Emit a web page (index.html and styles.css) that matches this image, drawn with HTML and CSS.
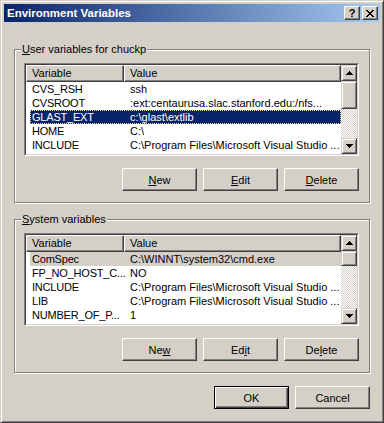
FILE: index.html
```html
<!DOCTYPE html>
<html>
<head>
<meta charset="utf-8">
<title>Environment Variables</title>
<link rel="stylesheet" href="styles.css">
</head>
<body>
<div class="window">
  <div class="caption">
    <span class="title">Environment Variables</span>
    <div class="cap-buttons">
      <span class="cap-btn help">?</span>
      <span class="cap-btn close"><svg width="8" height="7" viewBox="0 0 8 7"><path d="M0 0h2v1H0zM6 0h2v1H6zM1 1h2v1H1zM5 1h2v1H5zM2 2h4v1H2zM3 3h2v1H3zM2 4h4v1H2zM1 5h2v1H1zM5 5h2v1H5zM0 6h2v1H0zM6 6h2v1H6z" fill="#000"/></svg></span>
    </div>
  </div>
  <div class="client">
    <div class="group">
      <span class="legend"><u>U</u>ser variables for chuckp</span>
      <div class="listview">
        <div class="lv-inner">
          <div class="lv-main">
            <div class="lv-header"><div class="hcell c1">Variable</div><div class="hcell c2">Value</div></div>
            <div class="row"><span class="c1">CVS_RSH</span><span class="c2">ssh</span></div>
            <div class="row"><span class="c1">CVSROOT</span><span class="c2">:ext:centaurusa.slac.stanford.edu:/nfs...</span></div>
            <div class="row sel"><span class="c1">GLAST_EXT</span><span class="c2">c:\glast\extlib</span></div>
            <div class="row"><span class="c1">HOME</span><span class="c2">C:\</span></div>
            <div class="row"><span class="c1">INCLUDE</span><span class="c2">C:\Program Files\Microsoft Visual Studio ...</span></div>
          </div>
          <div class="scrollbar">
            <div class="sb-btn"><svg width="7" height="4" viewBox="0 0 7 4"><path d="M3 0h1v1H3zM2 1h3v1H2zM1 2h5v1H1zM0 3h7v1H0z" fill="#000"/></svg></div>
            <div class="sb-track"><div class="sb-thumb" style="height:28px"></div></div>
            <div class="sb-btn"><svg width="7" height="4" viewBox="0 0 7 4"><path d="M0 0h7v1H0zM1 1h5v1H1zM2 2h3v1H2zM3 3h1v1H3z" fill="#000"/></svg></div>
          </div>
        </div>
      </div>
      <div class="btn-row">
        <button class="btn"><u>N</u>ew</button>
        <button class="btn"><u>E</u>dit</button>
        <button class="btn"><u>D</u>elete</button>
      </div>
    </div>

    <div class="group">
      <span class="legend"><u>S</u>ystem variables</span>
      <div class="listview">
        <div class="lv-inner">
          <div class="lv-main">
            <div class="lv-header"><div class="hcell c1">Variable</div><div class="hcell c2">Value</div></div>
            <div class="row sel-inactive"><span class="c1">ComSpec</span><span class="c2">C:\WINNT\system32\cmd.exe</span></div>
            <div class="row"><span class="c1">FP_NO_HOST_C...</span><span class="c2">NO</span></div>
            <div class="row"><span class="c1">INCLUDE</span><span class="c2">C:\Program Files\Microsoft Visual Studio ...</span></div>
            <div class="row"><span class="c1">LIB</span><span class="c2">C:\Program Files\Microsoft Visual Studio ...</span></div>
            <div class="row"><span class="c1">NUMBER_OF_P...</span><span class="c2">1</span></div>
          </div>
          <div class="scrollbar">
            <div class="sb-btn"><svg width="7" height="4" viewBox="0 0 7 4"><path d="M3 0h1v1H3zM2 1h3v1H2zM1 2h5v1H1zM0 3h7v1H0z" fill="#000"/></svg></div>
            <div class="sb-track"><div class="sb-thumb" style="height:15px"></div></div>
            <div class="sb-btn"><svg width="7" height="4" viewBox="0 0 7 4"><path d="M0 0h7v1H0zM1 1h5v1H1zM2 2h3v1H2zM3 3h1v1H3z" fill="#000"/></svg></div>
          </div>
        </div>
      </div>
      <div class="btn-row">
        <button class="btn">Ne<u>w</u></button>
        <button class="btn">Ed<u>i</u>t</button>
        <button class="btn">De<u>l</u>ete</button>
      </div>
    </div>

    <div class="dialog-buttons">
      <button class="btn default">OK</button>
      <button class="btn">Cancel</button>
    </div>
  </div>
</div>
</body>
</html>
```

FILE: styles.css
```css
* {
  box-sizing: border-box;
}

html,
body {
  margin: 0;
  padding: 0;
}

body {
  width: 384px;
  height: 423px;
  overflow: hidden;
  background: #d4d0c8;
  font-family: "Liberation Sans", Arial, sans-serif;
  font-size: 11px;
  color: #000;
}

.window {
  width: 384px;
  height: 423px;
  background: #d4d0c8;
  border: 1px solid;
  border-color: #d4d0c8 #404040 #404040 #d4d0c8;
  box-shadow: inset 1px 1px 0 #fff, inset -1px -1px 0 #808080;
  padding: 3px;
}

.caption {
  height: 18px;
  display: flex;
  align-items: center;
  padding: 0 2px 0 3px;
  background: linear-gradient(to right, #0a246a, #a6caf0);
}

.title {
  flex: 1;
  color: #fff;
  font-weight: bold;
  font-size: 11.5px;
  white-space: nowrap;
}

.cap-buttons {
  display: flex;
  gap: 2px;
}

.cap-btn {
  width: 16px;
  height: 14px;
  display: flex;
  align-items: center;
  justify-content: center;
  background: #d4d0c8;
  border: 1px solid;
  border-color: #fff #404040 #404040 #fff;
  box-shadow: inset -1px -1px 0 #808080;
  font-weight: bold;
  font-size: 11px;
  line-height: 12px;
}

.cap-btn svg {
  display: block;
}

.client {
  padding: 0 10px;
}

.group {
  position: relative;
  margin-top: 27px;
  border: 1px solid #808080;
  box-shadow: 1px 1px 0 #fff, inset 1px 1px 0 #fff;
  padding: 13px 10px 11px 9px;
}

.group + .group {
  margin-top: 16px;
}

.legend {
  position: absolute;
  top: -7px;
  left: 6px;
  padding: 0 1px;
  line-height: 13px;
  background: #d4d0c8;
  white-space: nowrap;
}

.listview {
  height: 93px;
  border: 1px solid;
  border-color: #808080 #fff #fff #808080;
}

.lv-inner {
  height: 100%;
  display: flex;
  background: #fff;
  border: 1px solid;
  border-color: #404040 #d4d0c8 #d4d0c8 #404040;
}

.lv-main {
  flex: 1;
  min-width: 0;
  overflow: hidden;
}

.lv-header {
  display: flex;
  height: 17px;
  background: #d4d0c8;
}

.hcell {
  border: 1px solid;
  border-color: #fff #404040 #404040 #fff;
  box-shadow: inset -1px -1px 0 #808080;
  line-height: 15px;
  padding-left: 5px;
  white-space: nowrap;
}

.hcell.c1 {
  width: 98px;
  flex: none;
}

.hcell.c2 {
  flex: 1;
}

.row {
  display: flex;
  height: 14px;
  line-height: 14px;
  margin-left: 4px;
  white-space: nowrap;
}

.row .c1 {
  width: 94px;
  flex: none;
  padding-left: 2px;
  letter-spacing: -0.2px;
}

.row .c2 {
  padding-left: 6px;
  overflow: hidden;
}

.row.sel {
  background: #0a246a;
  color: #fff;
  outline: 1px dotted #f5db95;
  outline-offset: -1px;
}

.row.sel-inactive {
  background: #d4d0c8;
}

.scrollbar {
  width: 16px;
  flex: none;
  display: flex;
  flex-direction: column;
  background: repeating-conic-gradient(#fff 0 25%, #d4d0c8 0 50%) 0 0 / 2px 2px;
}

.sb-btn,
.sb-thumb {
  background: #d4d0c8;
  border: 1px solid;
  border-color: #d4d0c8 #404040 #404040 #d4d0c8;
  box-shadow: inset 1px 1px 0 #fff, inset -1px -1px 0 #808080;
}

.sb-btn {
  height: 16px;
  flex: none;
  display: flex;
  align-items: center;
  justify-content: center;
}

.sb-btn svg {
  display: block;
}

.sb-track {
  flex: 1;
}

.btn-row,
.dialog-buttons {
  display: flex;
  justify-content: flex-end;
  gap: 6px;
}

.btn-row {
  margin-top: 12px;
}

.dialog-buttons {
  margin-top: 13px;
}

.btn {
  width: 75px;
  height: 23px;
  padding: 0;
  font: inherit;
  color: #000;
  background: #d4d0c8;
  border: 1px solid;
  border-color: #fff #404040 #404040 #fff;
  box-shadow: inset -1px -1px 0 #808080, inset 1px 1px 0 #d4d0c8;
}

.btn.default {
  border-color: #000;
  box-shadow: inset 1px 1px 0 #fff, inset -1px -1px 0 #404040, inset -2px -2px 0 #808080;
}
```
